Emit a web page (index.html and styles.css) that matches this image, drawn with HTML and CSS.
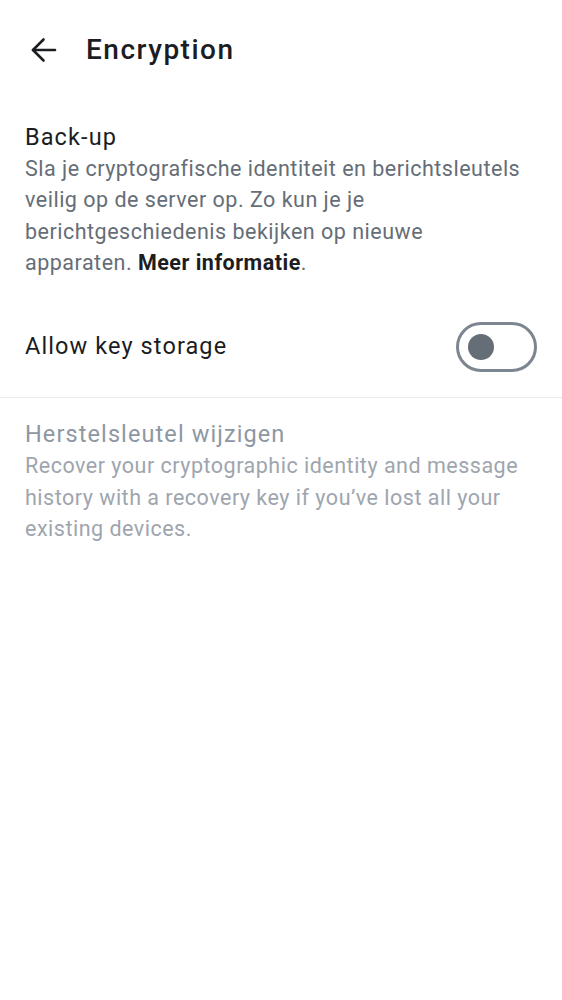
FILE: index.html
```html
<!DOCTYPE html>
<html lang="nl">
<head>
<meta charset="utf-8">
<link rel="stylesheet" href="styles.css">
</head>
<body>
<header class="topbar">
  <button class="back" aria-label="Back">
    <svg width="26" height="26" viewBox="0 0 26 26" fill="none" stroke="#1b1d22" stroke-width="2.6" stroke-linecap="round" stroke-linejoin="round">
      <path d="M24 13H2"/>
      <path d="M12.5 2.5L2 13l10.5 10.5"/>
    </svg>
  </button>
  <h1 class="title">Encryption</h1>
</header>

<section class="block">
  <h2 class="heading">Back-up</h2>
  <p class="desc">Sla je cryptografische identiteit en berichtsleutels veilig op de server op. Zo kun je je berichtgeschiedenis bekijken op nieuwe apparaten. <b class="link">Meer informatie</b>.</p>
</section>

<div class="row">
  <span class="row-label">Allow key storage</span>
  <span class="toggle"><span class="thumb"></span></span>
</div>

<hr class="divider">

<section class="block disabled">
  <h2 class="heading">Herstelsleutel wijzigen</h2>
  <p class="desc">Recover your cryptographic identity and message history with a recovery key if you’ve lost all your existing devices.</p>
</section>
</body>
</html>
```

FILE: styles.css
```css
html, body {
  margin: 0;
  padding: 0;
  background: #ffffff;
}
body {
  font-family: Roboto, "Noto Sans", sans-serif;
  color: #1b1d22;
  width: 562px;
}
.topbar {
  display: flex;
  align-items: center;
  height: 99px;
  padding-left: 31px;
  box-sizing: border-box;
}
.back {
  border: 0;
  background: none;
  padding: 0;
  width: 26px;
  height: 26px;
  display: flex;
  margin-right: 29px;
}
.title {
  margin: 0;
  font-size: 28px;
  line-height: 32px;
  font-weight: 500;
  letter-spacing: 1.5px;
}
.block {
  padding: 23px 25px 0 25px;
}
.heading {
  margin: 0;
  font-size: 23.5px;
  font-weight: 400;
  line-height: 31px;
  letter-spacing: 1.1px;
}
.desc {
  margin: 0;
  max-width: 505px;
  font-size: 21.5px;
  line-height: 31.3px;
  letter-spacing: 0.5px;
  color: #656d77;
}
.link {
  color: #1b1d22;
  font-weight: 700;
}
.row {
  display: flex;
  align-items: center;
  justify-content: space-between;
  padding: 0 25px 0 25px;
  height: 100px;
  margin-top: 18.8px;
}
.row-label {
  font-size: 23.5px;
  line-height: 31px;
  letter-spacing: 1.1px;
}
.toggle {
  width: 81px;
  height: 50px;
  box-sizing: border-box;
  border: 3px solid #7d8590;
  border-radius: 25px;
  display: flex;
  align-items: center;
  padding-left: 9px;
}
.thumb {
  width: 26px;
  height: 26px;
  border-radius: 50%;
  background: #656d77;
}
.divider {
  margin: 0;
  border: 0;
  border-top: 1px solid #e9ebee;
}
.block.disabled {
  padding-top: 21.5px;
}
.disabled .heading {
  color: #8d97a3;
}
.disabled .desc {
  color: #9ea5ae;
}
```
